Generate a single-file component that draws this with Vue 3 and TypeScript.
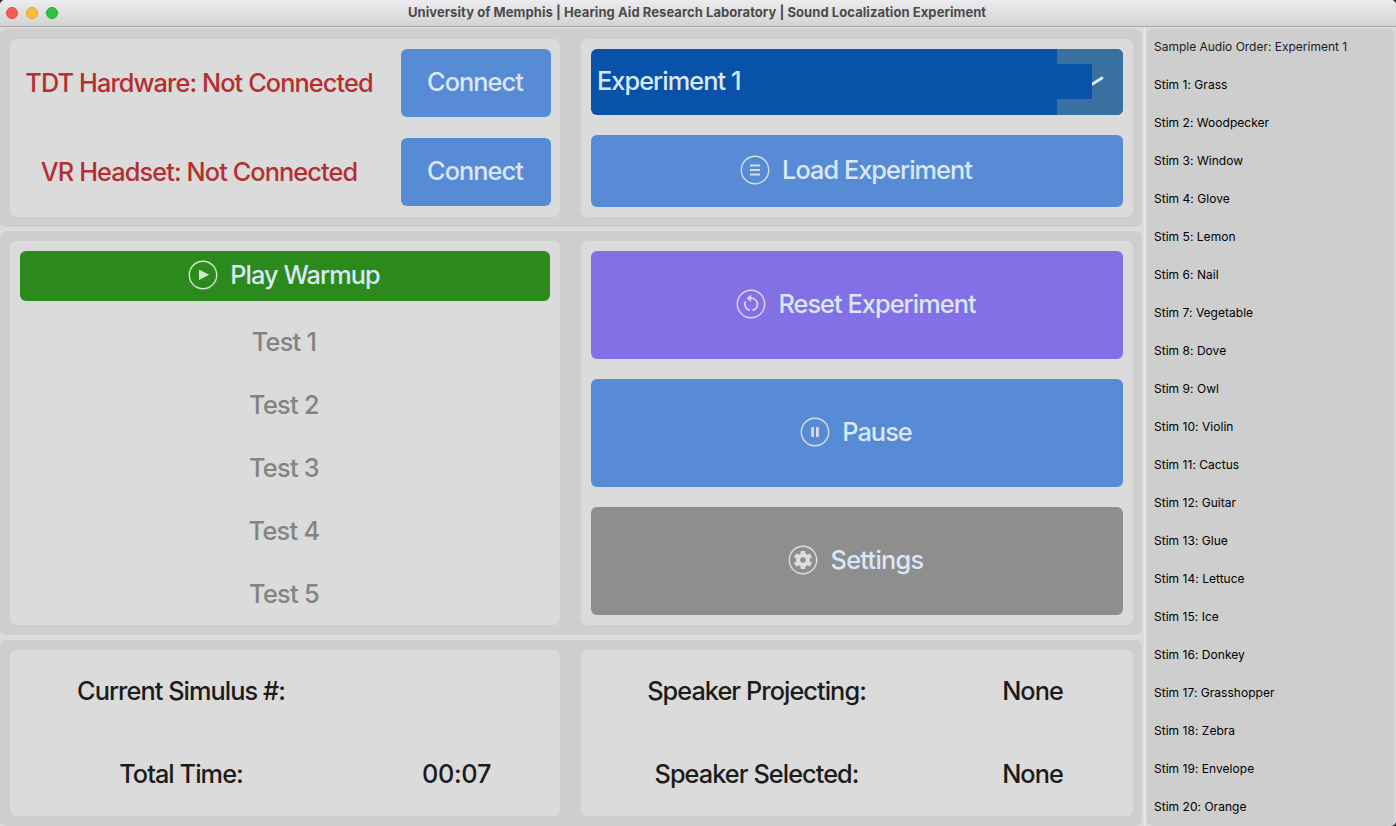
<script setup lang="ts">
const tests: string[] = ['Test 1', 'Test 2', 'Test 3', 'Test 4', 'Test 5']
const words: string[] = [
  'Grass', 'Woodpecker', 'Window', 'Glove', 'Lemon', 'Nail', 'Vegetable', 'Dove', 'Owl', 'Violin',
  'Cactus', 'Guitar', 'Glue', 'Lettuce', 'Ice', 'Donkey', 'Grasshopper', 'Zebra', 'Envelope', 'Orange',
]
</script>

<template>
  <div class="window">
    <header class="titlebar">
      <div class="lights"><i class="red"></i><i class="yellow"></i><i class="green"></i></div>
      <h1>University of Memphis | Hearing Aid Research Laboratory | Sound Localization Experiment</h1>
    </header>
    <div class="body">
      <main class="main">
        <section class="band top">
          <div class="card connections">
            <span class="status t">TDT Hardware: Not Connected</span>
            <button class="btn blue"><span class="t">Connect</span></button>
            <span class="status t">VR Headset: Not Connected</span>
            <button class="btn blue"><span class="t">Connect</span></button>
          </div>
          <div class="card loader">
            <div class="select">
              <span class="value t">Experiment 1</span>
              <span class="arrow">
                <svg width="66" height="66" viewBox="0 0 66 66">
                  <path d="M28 29 L34 36 L45 29" fill="none" stroke="#dcebfa" stroke-width="2.8" stroke-linecap="round" />
                  <rect x="0" y="15" width="35" height="35" fill="#0852aa" />
                </svg>
              </span>
            </div>
            <button class="btn blue">
              <svg class="icon" viewBox="0 0 30 30"><circle cx="15" cy="15" r="13.7" /><path class="bars" d="M10 10.5H20M10 15H20M10 19.5H20" /></svg>
              <span class="t">Load Experiment</span>
            </button>
          </div>
        </section>
        <section class="band middle">
          <div class="card playlist">
            <button class="btn play">
              <svg class="icon" viewBox="0 0 30 30"><circle cx="15" cy="15" r="13.7" /><path class="solid" d="M11 9.6L21.2 14.8L11 20Z" /></svg>
              <span class="t">Play Warmup</span>
            </button>
            <div v-for="test in tests" :key="test" class="test"><span class="t snug">{{ test }}</span></div>
          </div>
          <div class="card actions">
            <button class="btn violet">
              <svg class="icon" viewBox="0 0 30 30"><circle cx="15" cy="15" r="13.7" /><path class="ring" d="M14 9.2H15A6.1 6.1 0 0 1 16.4 21.3M13.8 21.3A6.3 6.3 0 0 1 9.6 12.2" /><path class="solid" d="M10.6 9.2L15.2 5.4V13Z" /></svg>
              <span class="t">Reset Experiment</span>
            </button>
            <button class="btn blue">
              <svg class="icon" viewBox="0 0 30 30"><circle cx="15" cy="15" r="13.7" /><path class="pause" d="M12.6 10V20M17.4 10V20" /></svg>
              <span class="t">Pause</span>
            </button>
            <button class="btn gray">
              <svg class="icon" viewBox="0 0 30 30"><circle cx="15" cy="15" r="13.7" /><circle class="hub" cx="15" cy="15" r="4.8" /><path class="teeth" d="M15 5.9V9M15 21V24.1M7.1 10.45L9.8 12M20.2 18L22.9 19.55M7.1 19.55L9.8 18M20.2 12L22.9 10.45" /></svg>
              <span class="t snug">Settings</span>
            </button>
          </div>
        </section>
        <section class="band bottom">
          <div class="card stats left">
            <span class="t">Current Simulus #:</span><span></span>
            <span class="t">Total Time:</span><span class="t clock">00:07</span>
          </div>
          <div class="card stats right">
            <span class="t">Speaker Projecting:</span><span class="t">None</span>
            <span class="t">Speaker Selected:</span><span class="t">None</span>
          </div>
        </section>
      </main>
      <div class="divider"></div>
      <aside class="order">
        <p class="heading">Sample Audio Order: Experiment 1</p>
        <p v-for="(word, i) in words" :key="word">Stim {{ i + 1 }}: {{ word }}</p>
      </aside>
    </div>
  </div>
</template>

<style>
body { background: #26262c; }
</style>

<style scoped>
* { box-sizing: border-box; }
.window { width: 1396px; height: 826px; overflow: hidden; display: flex; flex-direction: column; background: #dcdcdc; border-radius: 5px 5px 5px 0; font-family: Inter, "Liberation Sans", sans-serif; }
.titlebar { height: 27px; flex: none; display: flex; align-items: center; background: linear-gradient(#ececee, #d3d3d3); border-bottom: 1px solid #a9a9a9; }
.lights { display: flex; gap: 8px; width: 408px; padding-left: 6px; }
.lights i { width: 12px; height: 12px; border-radius: 50%; }
.red { background: #fc5b57; border: 1px solid #de4643; }
.yellow { background: #fdbc33; border: 1px solid #dfa031; }
.green { background: #29c740; border: 1px solid #20ab30; }
h1 { margin: 0; padding-bottom: 2px; font-size: 13px; line-height: 16px; font-weight: 700; letter-spacing: 0.065px; color: #4b4b4b; white-space: nowrap; }
.body { flex: 1; display: flex; padding-top: 2px; min-height: 0; }
.main { width: 1142px; display: grid; grid-template-columns: 1142px; grid-template-rows: 198px 404px 187px; row-gap: 4px; }
.band { background: #cecece; border-radius: 6px; padding: 10px 9px 10px 10px; display: grid; grid-template-columns: 550px 552px; column-gap: 21px; }
.bottom { margin-top: 1px; }
.card { background: #dbdbdb; border-radius: 6px; padding: 10px; }
.btn { border: 0; border-radius: 6px; padding: 0 0 2px; display: flex; align-items: center; justify-content: center; gap: 12px; font: inherit; color: #dae7f8; }
.t { white-space: nowrap; }
.band .t { font-size: 25.3px; line-height: 32px; letter-spacing: -0.94px; margin-right: 2px; font-weight: 460; }
.band .t.status { letter-spacing: -0.9px; margin-right: 2px; }
.band .t.snug { letter-spacing: -0.7px; }
.band .t.clock { letter-spacing: -0.3px; margin-right: 1px; }
.blue { background: #588bd5; }
.violet { background: #836fe6; }
.gray { background: #8e8e8e; }
.play { background: #2b8a1b; }
.icon { width: 30px; height: 30px; color: #d6dde8; }
.play .icon { color: #cfe6cc; }
.violet .icon { color: #dcd6f4; }
.gray .icon { color: #dedede; }
.icon * { fill: none; stroke: currentColor; stroke-width: 1.4; }
.icon .bars { stroke-width: 2; }
.icon .ring { stroke-width: 1.8; }
.icon .pause { stroke-width: 2.8; }
.icon .hub { stroke-width: 4.2; }
.icon .teeth { stroke-width: 4.4; }
.icon .solid { fill: currentColor; stroke: none; }
.connections { display: grid; grid-template-columns: 360px 150px; grid-template-rows: 68px 68px; gap: 21px; }
.status { align-self: center; text-align: center; color: #b52f30; }
.loader { display: grid; grid-template-rows: 66px 72px; row-gap: 20px; }
.select { background: #0852aa; border-radius: 6px; overflow: hidden; display: flex; align-items: center; justify-content: space-between; padding-left: 6px; color: #dae7f8; }
.value { padding-bottom: 2px; }
.arrow { background: #3871a0; width: 66px; height: 66px; }
.playlist { display: grid; grid-template-rows: 59px; grid-auto-rows: 63px; padding-bottom: 0; }
.play { height: 50px; }
.test { display: flex; align-items: center; justify-content: center; color: #838383; }
.actions { display: grid; grid-template-rows: repeat(3, 108px); row-gap: 20px; }
.stats { display: grid; grid-template-rows: 83px 83px; align-items: center; justify-items: center; padding: 0; color: #1c1c1c; }
.stats .t { padding-bottom: 2px; }
.left { grid-template-columns: 344px 206px; }
.right { grid-template-columns: 353px 199px; }
.divider { width: 1px; margin: -2px 2px 0; background: #ececec; }
.order { width: 248px; padding: 0 7px; background: #cecece; border-radius: 6px; }
.order p { margin: 0; height: 38px; line-height: 36px; font-size: 12px; letter-spacing: 0.03px; color: #000; white-space: nowrap; }
.order .heading { color: #1c1c1c; letter-spacing: -0.01px; }
</style>
